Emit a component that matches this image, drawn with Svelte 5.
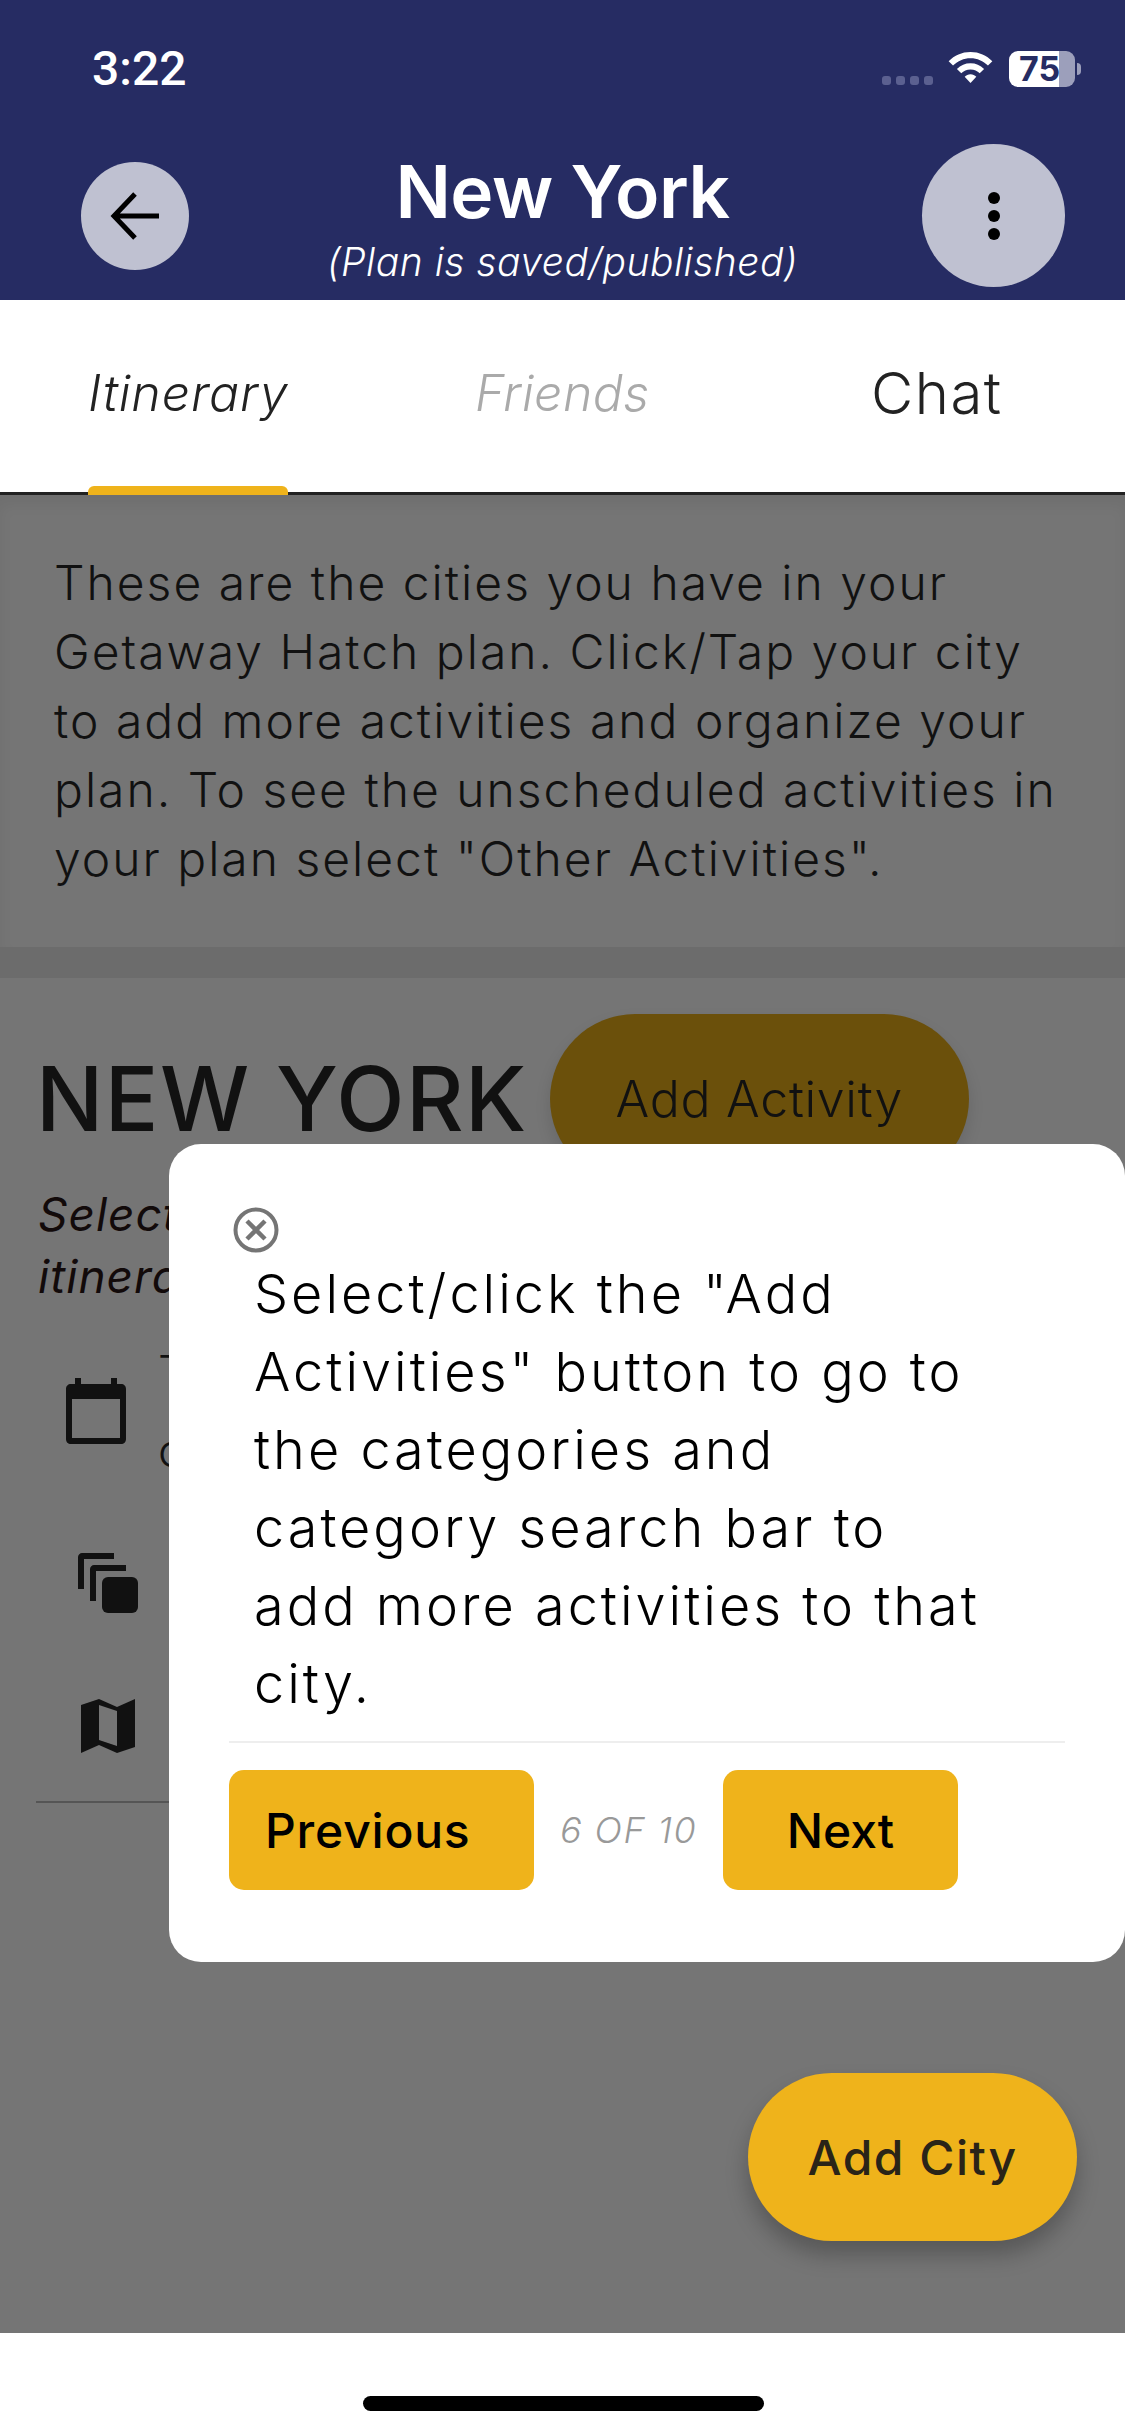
<script>
	const lines = [
		'These are the cities you have in your',
		'Getaway Hatch plan. Click/Tap your city',
		'to add more activities and organize your',
		'plan. To see the unscheduled activities in',
		'your plan select "Other Activities".'
	];
	const tip = [
		'Select/click the "Add',
		'Activities" button to go to',
		'the categories and',
		'category search bar to',
		'add more activities to that',
		'city.'
	];
</script>

<div class="screen">
	<header class="top">
		<div class="status">
			<span class="time">3:22</span>
			<div class="status-right">
				<span class="dots"><i></i><i></i><i></i><i></i></span>
				<svg class="wifi" viewBox="0 0 46 34" width="45" height="33">
					<path d="M23 0C14 0 6.500 3.500 0.500 9.500L5 14C10 9.200 16 6.500 23 6.500S36 9.200 41 14L45.500 9.500C39.500 3.500 32 0 23 0Z" fill="#fff"/>
					<path d="M23 11.500C17.500 11.500 13 13.500 9 17.500L13.500 22C16 19.500 19 18 23 18S30 19.500 32.500 22L37 17.500C33 13.500 28.500 11.500 23 11.500Z" fill="#fff"/>
					<path d="M23 23C20.500 23 18.700 24 17 25.500L23 32L29 25.500C27.300 24 25.500 23 23 23Z" fill="#fff"/>
				</svg>
				<div class="battery">75</div>
				<span class="nub"></span>
			</div>
		</div>
		<div class="bar">
			<button class="back" aria-label="Back">
				<svg viewBox="0 0 50 50" width="50" height="50">
					<path d="M49 25H6M25 3L4 25L25 47" fill="none" stroke="#000" stroke-width="5"/>
				</svg>
			</button>
			<div class="title">
				<h1>New York</h1>
				<p>(Plan is saved/published)</p>
			</div>
			<button class="more" aria-label="More">
				<i></i><i></i><i></i>
			</button>
		</div>
	</header>

	<nav class="tabs">
		<span class="tab active">Itinerary</span>
		<span class="tab friends">Friends</span>
		<span class="tab chat">Chat</span>
	</nav>

	<main class="body">
		<section class="intro">
			{#each lines as l}<div>{l}</div>{/each}
		</section>
		<div class="band"></div>
		<section class="city">
			<div class="city-head">
				<h2>NEW YORK</h2>
				<span class="add-activity">Add Activity</span>
			</div>
			<p class="hint">Select<br />itinerary</p>
			<div class="row cal">
				<svg viewBox="0 0 60 66" width="60" height="66">
					<path d="M9 0h6v6h30V0h6v6h4c3 0 5 2 5 5v50c0 3-2 5-5 5H5c-3 0-5-2-5-5V11c0-3 2-5 5-5h4ZM6 21v39h48V21Z" fill="#111" fill-rule="evenodd"/>
				</svg>
				<span class="row-text">T<br />c</span>
			</div>
			<div class="row copy">
				<svg viewBox="0 0 60 60" width="60" height="60">
					<path d="M0 36V4C0 2 2 0 4 0H36V6H6V36Z M12 48V16C12 14 14 12 16 12H48V18H18V48Z" fill="#111"/>
					<rect x="24" y="24" width="36" height="36" rx="6" fill="#111"/>
				</svg>
			</div>
			<div class="row map">
				<svg viewBox="0 0 54 54" width="54" height="54">
					<path d="M0 6L18 0L36 8L54 0V48L36 54L18 46L0 54ZM18 6V41L36 47V12Z" fill="#111" fill-rule="evenodd"/>
				</svg>
			</div>
			<div class="rule"></div>
		</section>
		<button class="add-city">Add City</button>

		<div class="tip">
			<svg class="close" viewBox="0 0 46 46" width="46" height="46">
				<circle cx="23" cy="23" r="20.500" fill="none" stroke="#757575" stroke-width="4"/>
				<path d="M14 14L32 32M32 14L14 32" stroke="#757575" stroke-width="4.500"/>
			</svg>
			<div class="tip-text">
				{#each tip as l}<div>{l}</div>{/each}
			</div>
			<div class="tip-rule"></div>
			<div class="tip-actions">
				<button class="btn prev">Previous</button>
				<span class="count">6 OF 10</span>
				<button class="btn next">Next</button>
			</div>
		</div>
	</main>

	<footer class="foot"><span class="home"></span></footer>
</div>

<style>
	:global(body) {
		margin: 0;
		background: #fff;
	}

	.screen {
		width: 1125px;
		height: 2436px;
		display: flex;
		flex-direction: column;
		overflow: hidden;
		font-family: "Inter", "Open Sans", sans-serif;
	}

	button {
		font-family: inherit;
		border: 0;
		padding: 0;
	}

	.top {
		height: 300px;
		background: #262c63;
		color: #fff;
		display: flex;
		flex-direction: column;
	}

	.status {
		height: 140px;
		display: flex;
		justify-content: space-between;
		padding: 47px 44px 0 92px;
		box-sizing: border-box;
	}

	.time {
		font-family: "Roboto", sans-serif;
		font-weight: 500;
		font-size: 48px;
		line-height: 44px;
	}

	.status-right {
		display: flex;
		align-items: flex-start;
		height: 40px;
		margin-top: 4px;
	}

	.dots {
		display: flex;
		gap: 5px;
		margin-top: 25px;
		margin-right: 15px;
	}

	.dots i {
		width: 9px;
		height: 9px;
		border-radius: 3px;
		background: #5b6090;
	}

	.wifi {
		margin: 1px 16px 0 0;
	}

	.battery {
		width: 66px;
		height: 36px;
		border-radius: 9px;
		background: linear-gradient(to right, #fff 50px, #9c9fbb 50px);
		font-weight: 700;
		font-size: 34px;
		line-height: 36px;
		color: #262c63;
		padding-left: 10px;
		box-sizing: border-box;
		white-space: nowrap;
	}

	.nub {
		width: 4px;
		height: 12px;
		margin: 12px 0 0 2px;
		border-radius: 0 4px 4px 0;
		background: #9c9fbb;
	}

	.bar {
		flex: 1;
		position: relative;
		display: flex;
		justify-content: center;
	}

	.back {
		position: absolute;
		left: 81px;
		top: 22px;
		width: 108px;
		height: 108px;
		border-radius: 50%;
		background: #bfc1d1;
		display: flex;
		align-items: center;
		justify-content: center;
	}

	.more {
		position: absolute;
		left: 922px;
		top: 4px;
		width: 143px;
		height: 143px;
		border-radius: 50%;
		background: #bfc1d1;
		display: flex;
		flex-direction: column;
		align-items: center;
		justify-content: center;
		gap: 6px;
	}

	.more i {
		width: 12px;
		height: 12px;
		border-radius: 50%;
		background: #000;
	}

	.title {
		text-align: center;
	}

	.title h1 {
		margin: 9px 0 0;
		font-size: 73px;
		line-height: 86px;
		font-weight: 600;
		letter-spacing: -0.5px;
	}

	.title p {
		margin: 3px 0 0;
		font-size: 39px;
		line-height: 48px;
		font-style: italic;
		font-weight: 300;
		letter-spacing: 0.5px;
	}

	.tabs {
		height: 195px;
		box-sizing: border-box;
		border-bottom: 3px solid #222;
		position: relative;
		background: #fff;
		color: #222;
	}

	.tab {
		position: absolute;
		top: 60px;
		line-height: 66px;
		font-size: 50px;
		font-weight: 300;
		font-style: italic;
		white-space: nowrap;
		letter-spacing: 0.9px;
	}

	.active {
		left: 88px;
	}

	.active::after {
		content: "";
		position: absolute;
		left: 0;
		right: 0;
		top: 126px;
		height: 9px;
		background: #efb31b;
		border-radius: 6px 6px 0 0;
	}

	.friends {
		left: 475px;
		color: #aaa;
		letter-spacing: 0.4px;
	}

	.chat {
		left: 871px;
		font-style: normal;
		font-size: 58px;
		letter-spacing: 1.5px;
	}

	.body {
		flex: 1;
		position: relative;
		background: #757575;
		color: #111;
	}

	.intro {
		height: 452px;
		box-sizing: border-box;
		padding: 53px 0 0 54px;
		box-shadow: inset 0 10px 14px rgba(0, 0, 0, 0.05);
		font-size: 48px;
		line-height: 69px;
		font-weight: 300;
		letter-spacing: 2px;
		white-space: nowrap;
	}

	.band {
		height: 31px;
		background: #6c6c6c;
	}

	.city {
		padding: 36px 0 0 36px;
	}

	.city-head {
		display: flex;
		align-items: flex-start;
		gap: 22px;
	}

	.city-head h2 {
		margin: 0;
		padding-top: 25px;
		font-size: 89px;
		line-height: 120px;
		font-weight: 500;
		letter-spacing: 1.5px;
		white-space: nowrap;
	}

	.add-activity {
		width: 419px;
		height: 170px;
		border-radius: 85px;
		background: #6b500b;
		font-size: 50px;
		font-weight: 300;
		letter-spacing: 0.7px;
		display: flex;
		align-items: center;
		justify-content: center;
		box-shadow: 0 8px 16px rgba(0, 0, 0, 0.12);
	}

	.hint {
		margin: 0 0 0 2px;
		font-size: 46px;
		line-height: 62px;
		font-style: italic;
		color: #120a0a;
		letter-spacing: 1px;
		position: relative;
		top: -1px;
	}

	.row {
		display: flex;
		align-items: center;
		gap: 32px;
		margin-left: 30px;
	}

	.row-text {
		font-size: 46px;
		line-height: 78px;
		font-weight: 300;
		white-space: nowrap;
	}

	.cal {
		margin-top: 25px;
	}

	.copy {
		margin: 64px 0 0 42px;
	}

	.map {
		margin: 86px 0 0 45px;
	}

	.rule {
		height: 2px;
		background: #555;
		margin: 48px 0 0 0;
		width: 140px;
	}

	.add-city {
		position: absolute;
		left: 748px;
		top: 1578px;
		width: 329px;
		height: 168px;
		border-radius: 84px;
		background: #efb31b;
		color: #2a2418;
		font-size: 48px;
		font-weight: 500;
		letter-spacing: 1.5px;
		box-shadow: 0 14px 22px rgba(0, 0, 0, 0.25);
	}

	.tip {
		position: absolute;
		left: 169px;
		top: 649px;
		width: 956px;
		height: 818px;
		background: #fff;
		border-radius: 32px;
		box-sizing: border-box;
		padding: 63px 60px 0 60px;
		color: #000;
	}

	.close {
		display: block;
		margin-left: 4px;
	}

	.tip-text {
		margin: 2px 0 0 25px;
		font-size: 54px;
		line-height: 78px;
		font-weight: 300;
		letter-spacing: 3px;
		white-space: nowrap;
	}

	.tip-rule {
		height: 2px;
		background: #eee;
		margin-top: 18px;
	}

	.tip-actions {
		display: flex;
		align-items: center;
		margin-top: 27px;
	}

	.btn {
		height: 120px;
		border-radius: 15px;
		background: #efb31b;
		color: #000;
		font-size: 48px;
		font-weight: 500;
	}

	.prev {
		width: 305px;
		text-align: left;
		padding-left: 36px;
		letter-spacing: 0.8px;
	}

	.next {
		width: 235px;
	}

	.count {
		width: 189px;
		text-align: center;
		font-size: 36px;
		font-style: italic;
		font-weight: 300;
		letter-spacing: 1.5px;
		color: #999;
		white-space: nowrap;
	}

	.foot {
		height: 103px;
		background: #fff;
		position: relative;
	}

	.home {
		position: absolute;
		left: 363px;
		top: 63px;
		width: 401px;
		height: 15px;
		border-radius: 8px;
		background: #000;
	}
</style>
